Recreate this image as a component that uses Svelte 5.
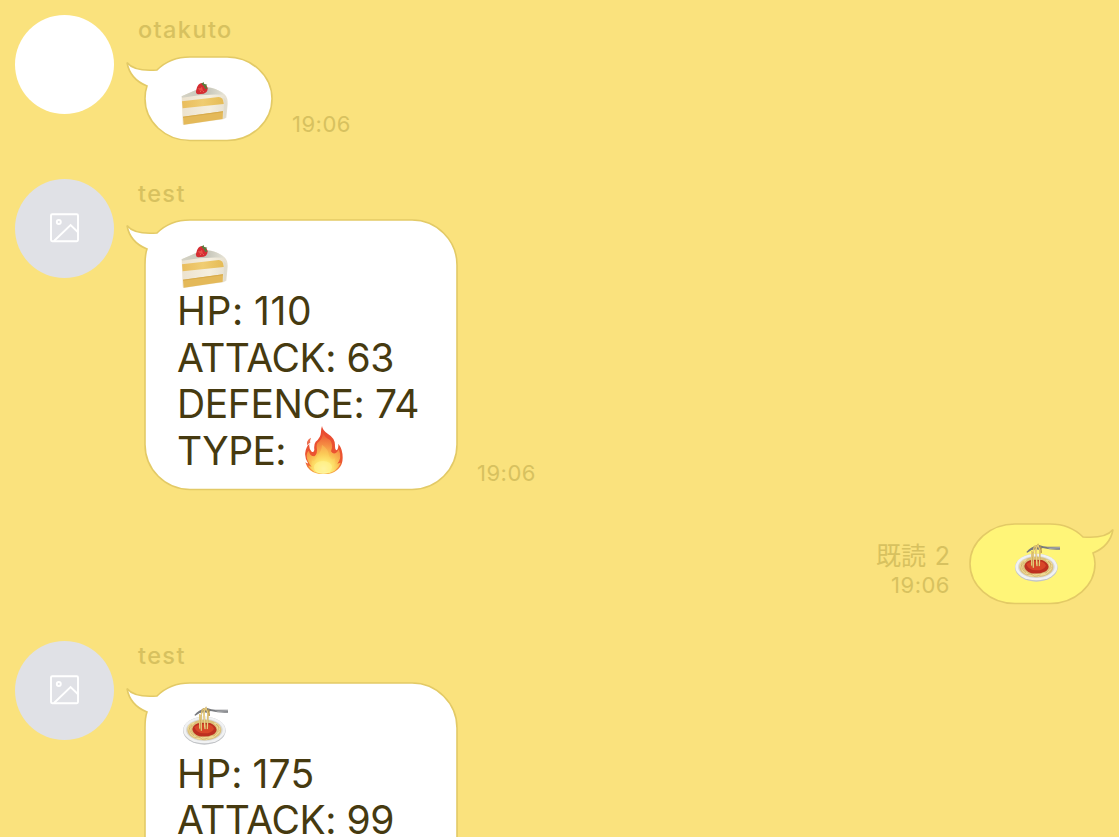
<script>
  const messages = [
    { side: 'in', name: 'otakuto', photo: true, emoji: 'cake', lines: [], time: '19:06', w: 127, h: 83.5 },
    {
      side: 'in', name: 'test', emoji: 'cake', time: '19:06', w: 312, h: 269.5, fire: true,
      lines: [
        { text: 'HP: 110', gap: 0.6 },
        { text: 'ATTACK: 63', gap: -0.45 },
        { text: 'DEFENCE: 74', gap: -0.4 },
        { text: 'TYPE: ', gap: -0.6 }
      ]
    },
    { side: 'out', emoji: 'pasta', lines: [], read: '既読 2', time: '19:06', w: 125, h: 79.5 },
    {
      side: 'in', name: 'test', emoji: 'pasta', time: '', w: 312, h: 269,
      lines: [
        { text: 'HP: 175', gap: 0.2 },
        { text: 'ATTACK: 99', gap: -0.45 }
      ]
    }
  ];

  // Rounded bubble outline with a tail at its upper left corner.
  function outline(w, h) {
    const r = 45;
    const ry = Math.min(45, h / 2);
    const k = 0.45;
    const a = r * k;
    const b = ry * k;
    return `M${r} 0H${w - r}C${w - a} 0 ${w} ${b} ${w} ${ry}V${h - ry}C${w} ${h - b} ${w - a} ${h} ${w - r} ${h}H${r}C${a} ${h} 0 ${h - b} 0 ${h - ry}V${ry}C0 37 .5 33 2 29C-8 25 -16 17 -18 5.5C-13 12 -1 14 12 13C20 5 31 0 ${r} 0Z`;
  }
</script>

{#snippet cake()}
  <svg class="emoji" viewBox="30 27 144 144">
    <defs>
      <linearGradient id="sponge" x1="0" x2="1"><stop offset="0" stop-color="#e9bc5c" /><stop offset=".5" stop-color="#f0cd72" /><stop offset="1" stop-color="#e5bb55" /></linearGradient>
      <linearGradient id="cream" x1="0" x2="1"><stop offset="0" stop-color="#ece2ce" /><stop offset=".6" stop-color="#f5efdf" /><stop offset="1" stop-color="#e5dfcf" /></linearGradient>
      <linearGradient id="icing" x1="0" x2="1"><stop offset="0" stop-color="#d5d3c5" /><stop offset=".6" stop-color="#c5c5b9" /><stop offset="1" stop-color="#e4e2d5" /></linearGradient>
    </defs>
    <path d="M35 73L83 52Q103 43 123 47Q151 54 165 68Q174 78 173 96L169 137L160 142L41 159Q38 159 38 154Z" fill="url(#cream)" />
    <path d="M35 73L83 52Q103 43 123 47Q151 54 162 68Q100 65 36 77Z" fill="url(#icing)" />
    <path d="M36 88L146 75Q159 76 161 92L161 96L38 109Z" fill="url(#sponge)" />
    <path d="M39 134L159 118L158 141L41 158Z" fill="#e4b959" />
    <path d="M39 134L159 118V121L39 137Z" fill="#d7aa4b" />
    <path d="M160 78Q171 82 171 99L167 136L160 140L162 95Z" fill="#e0dccd" />
    <path d="M79 53Q83 34 96 33Q110 36 113 49Q113 62 101 65L84 67Q75 64 79 53Z" fill="#d52d32" />
    <path d="M85 54L96 44L99 57Z" fill="#ea5148" />
    <path d="M94 35L101 30L102 36L112 38L107 43L113 49L106 51L101 42Z" fill="#557e3c" />
    <path d="M86 48h2v2h-2zM91 57h2v2h-2zM99 58h2v2h-2z" fill="#f4a07f" />
  </svg>
{/snippet}

{#snippet pasta()}
  <svg class="emoji" viewBox="19 23 144 144">
    <ellipse cx="92" cy="97" rx="64" ry="42" fill="#c3c5c8" />
    <ellipse cx="92" cy="95" rx="63" ry="40" fill="#f1f2f3" />
    <ellipse cx="92" cy="95" rx="55" ry="33" fill="#d9d9d8" />
    <ellipse cx="92" cy="95" rx="51" ry="31" fill="#dcc17a" />
    <g fill="none" stroke="#f2dd99" stroke-width="3">
      <path d="M44 96Q40 76 62 73Q41 86 51 106Q64 126 93 122Q60 119 48 104" />
      <path d="M138 96Q142 77 122 74Q140 89 129 108Q117 123 91 119Q126 119 138 99" />
      <path d="M52 86Q44 99 60 111M130 83Q139 99 123 110M61 111L73 122L88 115L98 124L111 115L120 117" />
    </g>
    <g fill="none" stroke="#b9914b" stroke-width="1.2">
      <path d="M48 88Q48 105 62 114M54 80L46 94M135 90Q132 106 120 114M62 118L76 116L87 123L105 119M127 77L136 88" />
    </g>
    <path d="M56 92Q60 75 80 73L109 74Q126 81 129 94Q127 105 117 109Q101 117 77 114Q57 108 56 92Z" fill="#bd3020" />
    <path d="M62 87Q74 75 94 78Q116 77 121 91Q113 106 91 105Q69 105 62 87Z" fill="#d84628" />
    <path d="M100 29Q116 35 128 34L166 34V43Q136 45 111 38L99 43Q82 39 65 52L62 50Q77 33 91 33Z" fill="#77797d" />
    <path d="M123 37L165 36V39L133 40Z" fill="#b4b6b9" />
    <g fill="none" stroke-linecap="round">
      <path d="M83 96V51Q84 32 91 31L94 91M101 91L103 45L97 29L91 41L93 86M78 50V91M107 51L105 35" stroke="#bc9848" stroke-width="4" />
      <path d="M83 96V51Q84 32 91 31L94 91M101 91L103 45L97 29L91 41L93 86M78 50V89" stroke="#edd486" stroke-width="2.8" />
    </g>
  </svg>
{/snippet}

{#snippet flame()}
  <svg class="emoji flame" viewBox="15 15 144 144">
    <defs>
      <radialGradient id="fire" gradientUnits="userSpaceOnUse" cx="86" cy="144" r="113"><stop offset="0" stop-color="#fffbc3" /><stop offset=".19" stop-color="#ffef79" /><stop offset=".4" stop-color="#fac052" /><stop offset=".65" stop-color="#f58b42" /><stop offset="1" stop-color="#e94d32" /></radialGradient>
      <linearGradient id="edge" x1="0" y1="0" x2="0" y2="1"><stop offset="0" stop-color="#e94931" /><stop offset=".75" stop-color="#ec5731" /><stop offset="1" stop-color="#f8b348" /></linearGradient>
    </defs>
    <path d="M81 15Q83 29 98 38Q120 51 120 72Q119 84 124 88Q131 85 130 68Q143 84 143 110Q143 129 132 142Q115 161 83 160Q52 159 37 138L31 124Q38 129 39 126Q28 108 31 94Q33 77 43 68Q41 84 50 92Q57 95 58 86Q56 70 62 62Q77 51 78 33Q78 23 81 15Z" fill="url(#edge)" />
    <path d="M83 33Q88 49 105 57Q116 70 108 91Q117 104 128 91Q130 82 133 89Q141 111 127 128L137 125Q126 157 86 158Q53 158 40 134L50 137Q34 119 35 103Q36 92 42 90Q44 106 58 106Q69 98 65 78Q64 66 73 61Q85 50 83 33Z" fill="url(#fire)" />
    <ellipse cx="84" cy="139" rx="27" ry="19" fill="#fff9ae" opacity=".55" />
    <path d="M67 103Q80 91 81 71Q101 84 102 105Q111 122 119 111Q124 141 104 151Q76 162 59 144Q47 134 51 117Q60 127 67 103Z" fill="#ffe366" opacity=".3" />
    <path d="M48 50Q44 60 46 65Q38 68 37 74Q34 67 37 61Q40 54 48 50Z" fill="#ed6f51" />
  </svg>
{/snippet}

<main>
  {#each messages as m}
    <article class={m.side}>
      {#if m.side === 'in'}
        <div class="avatar" class:photo={m.photo}>
          {#if !m.photo}
            <svg width="30" height="30" viewBox="0 0 30 30" fill="none" stroke="#fff" stroke-width="1.9">
              <rect x="1" y="1.3" width="27" height="27" rx="1.2" />
              <circle cx="8.8" cy="9" r="2" />
              <path d="M4 28L20.6 12L28 19.2" />
            </svg>
          {/if}
        </div>
      {/if}
      <div class="content">
        {#if m.name}<div class="name">{m.name}</div>{/if}
        <div class="line">
          <div class="bubble" style="width:{m.w}px;height:{m.h}px">
            <svg class="shape" width={m.w} height={m.h}><path d={outline(m.w, m.h)} /></svg>
            <div class="text">
              <div class="first">{#if m.emoji === 'cake'}{@render cake()}{:else}{@render pasta()}{/if}</div>
              {#each m.lines as line, i}
                <div class="stat"><span class:hp={i === 0} style="letter-spacing:{line.gap}px">{line.text}</span>{#if m.fire && i === 3}{@render flame()}{/if}</div>
              {/each}
            </div>
          </div>
          <div class="meta">
            {#if m.read}<span class="read">{m.read}</span>{/if}
            <time>{m.time}</time>
          </div>
        </div>
      </div>
    </article>
  {/each}
</main>

<style>
  :global(body) { overflow: hidden; background: #fae27d; }
  main {
    box-sizing: border-box;
    height: 837px;
    overflow: hidden;
    padding: 15px 24.5px 0 15px;
    background: #fae27d;
    font-family: Inter, "Noto Sans CJK JP", sans-serif;
    color: #463a10;
  }
  article { display: flex; margin-bottom: 38px; }
  .out { justify-content: flex-end; margin-top: -4px; margin-bottom: 37.8px; }
  .avatar {
    display: flex;
    flex: none;
    align-items: center;
    justify-content: center;
    width: 99px;
    height: 99px;
    margin-right: 24px;
    border-radius: 50%;
    background: #e0e1e6;
  }
  .photo { background: #fff; }
  .name {
    height: 30px;
    margin-bottom: 12px;
    line-height: 30px;
    font-size: 23.5px;
    font-weight: 500;
    letter-spacing: 1.4px;
    color: #d7c15f;
  }
  article:nth-child(2) .name { margin-bottom: 11.5px; }
  .line { display: flex; align-items: flex-end; }
  .in .bubble { margin-left: 7px; }
  .out .line { flex-direction: row-reverse; }
  .bubble { position: relative; flex: none; }
  .shape { position: absolute; inset: 0; overflow: visible; }
  .shape path { fill: #fff; stroke: #e3ca66; stroke-width: 1.6; }
  .out .shape { transform: scaleX(-1); }
  .out .shape path { fill: #fff578; }
  .text { position: relative; padding: 21px 0 0 32px; }
  .first { display: flex; height: 46.9px; padding: 2.6px 0 0 2.5px; box-sizing: border-box; }
  .out .text { padding: 17px 0 0 40px; }
  .emoji { display: block; flex: none; width: 48px; height: 48px; }
  .stat {
    display: flex;
    align-items: center;
    height: 46.8px;
    font-size: 39px;
    line-height: 46.8px;
    white-space: pre;
  }
  .hp { word-spacing: -1.4px; }
  .flame { margin: -3px 0 0 4px; }
  .meta {
    display: flex;
    flex-direction: column;
    align-items: flex-end;
    margin: 0 19.5px 3.7px 20px;
    color: #d7c15f;
  }
  .in .meta { margin-bottom: 3px; }
  .out .meta { margin-bottom: 4.2px; }
  .read { font-size: 25px; line-height: 30px; letter-spacing: 0; word-spacing: 1.8px; white-space: nowrap; }
  time { font-size: 22px; line-height: 28px; letter-spacing: 0.5px; }
</style>
